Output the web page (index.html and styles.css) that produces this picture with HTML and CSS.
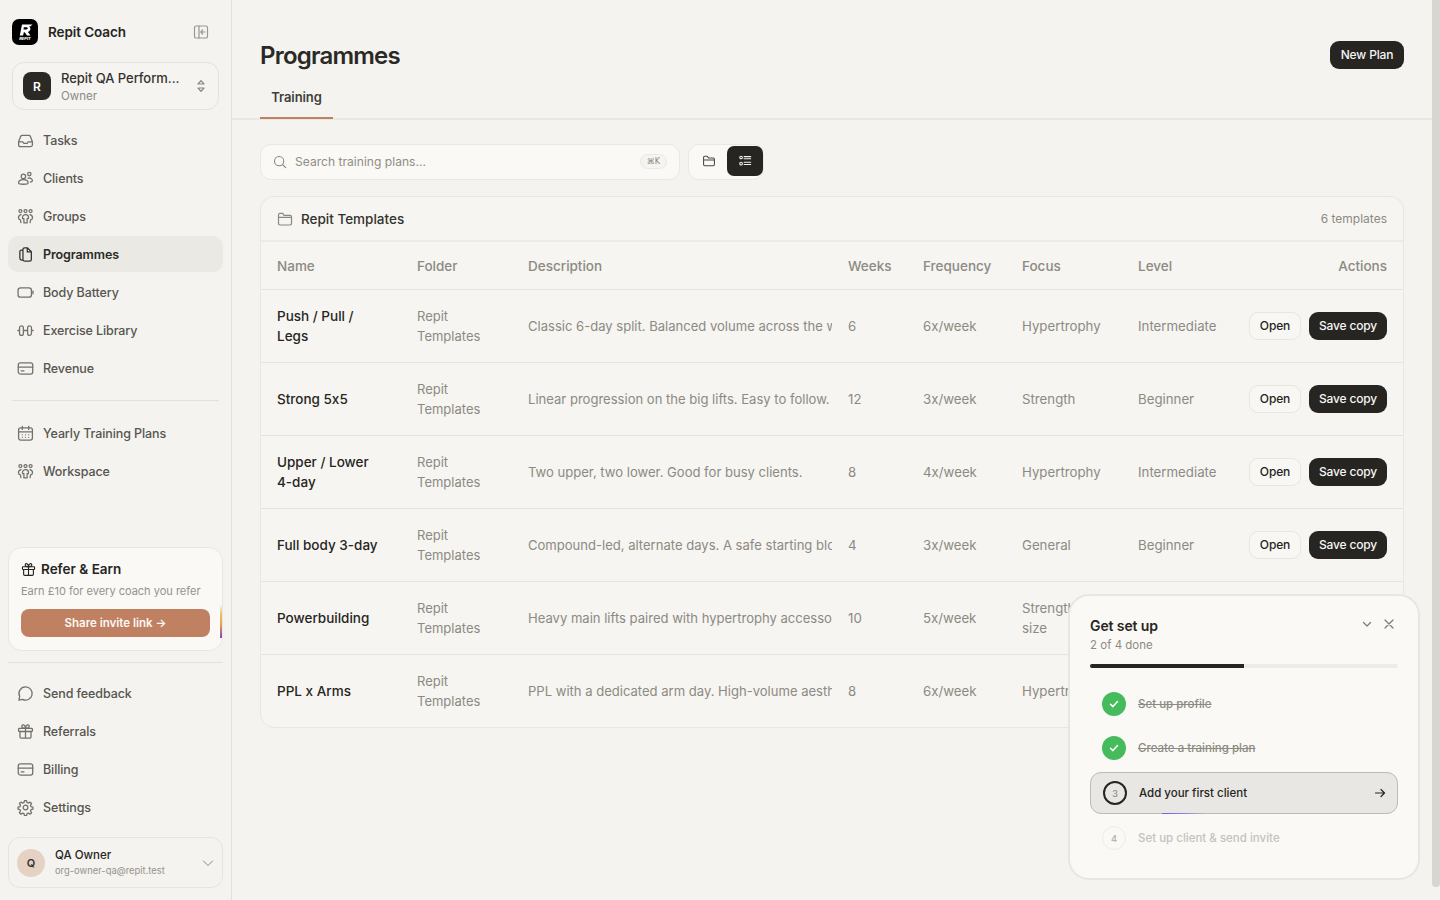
FILE: index.html
```html
<!DOCTYPE html>
<html lang="en">
<head>
<meta charset="utf-8">
<title>Programmes</title>
<link rel="stylesheet" href="styles.css">
</head>
<body>
<div class="app">
  <aside class="sidebar">
    <div class="brand">
      <div class="logo">
        <svg viewBox="0 0 26 26" width="26" height="26"><path d="M7.800 16.500 10 5.500h10.500l-2.200 2h-1.600c1.900.9 2.200 2.900 1 4.300-.5.6-1.100 1-1.800 1.200l2.600 3.500h-3.500l-2.200-3.300-1.100.2-.6 3.100z" fill="#fff"/><path d="M11.900 8.200h2.700c1.100 0 1.500 1 .7 1.700-.5.400-1.200.600-1.900.600h-1.900z" fill="#000"/></svg>
        <span class="logo-text">REPIT</span>
      </div>
      <span class="brand-name">Repit Coach</span>
      <svg class="collapse" viewBox="0 0 16 16" width="16" height="16"><rect x="1.500" y="2" width="13" height="12" rx="1.600"/><path d="M6 2v12M12 8H8M9.600 6 7.800 8l1.800 2"/></svg>
    </div>
    <div class="org">
      <div class="org-badge">R</div>
      <div class="org-text"><div class="org-name">Repit QA Perform...</div><div class="org-role">Owner</div></div>
      <svg class="updown" viewBox="0 0 10 16" width="10" height="16"><path d="M2 6 5 2.600 8 6zM2 10l3 3.400L8 10z"/></svg>
    </div>
    <nav class="nav">
      <a class="item"><svg class="ic" viewBox="0 0 16 16"><path d="M1.500 9.200V12a1.800 1.800 0 0 0 1.800 1.800h9.400a1.800 1.800 0 0 0 1.800-1.800V9.200M1.500 9.200l1.900-5a1.600 1.600 0 0 1 1.500-1h6.200a1.600 1.600 0 0 1 1.500 1l1.900 5M1.500 9.200h4l1 1.600h3l1-1.600h4"/></svg>Tasks</a>
      <a class="item"><svg class="ic" viewBox="0 0 16 16"><circle cx="6" cy="6" r="2.100"/><circle cx="11.600" cy="3.800" r="1.600"/><path d="M1.500 12.200c0-1.900 2-3.200 4.500-3.200s4.500 1.300 4.500 3.200c0 .8-1.300 1.200-4.500 1.200s-4.500-.4-4.500-1.200zM10.500 7.600c2-.3 4 .6 4 2.500 0 .7-.7 1.100-1.800 1.200"/></svg>Clients</a>
      <a class="item"><svg class="ic" viewBox="0 0 16 16"><circle cx="3.200" cy="2.900" r="1.400"/><circle cx="8" cy="2.900" r="1.400"/><circle cx="12.800" cy="2.900" r="1.400"/><path d="M8 6.200c1.700 0 2.800 1.200 2.800 2.500V10H9.500v4h-3v-4H5.200V8.700C5.200 7.400 6.300 6.200 8 6.200zM3.800 6.300C2.200 6.700 1.300 8 1.400 9.400c.1 1.100.9 1.600 1.800 1.700l.5 2.600M12.200 6.300c1.600.4 2.500 1.700 2.400 3.100-.1 1.100-.9 1.600-1.800 1.700l-.5 2.600"/></svg>Groups</a>
      <a class="item active"><svg class="ic" viewBox="0 0 16 16"><path d="M7.200 1.800h2.700l3.600 3.600v7.200a1.600 1.600 0 0 1-1.600 1.600H7.200a1.600 1.600 0 0 1-1.600-1.600V3.400a1.600 1.600 0 0 1 1.600-1.600zM9.700 1.800v3.800h3.800M5.600 3.800H4.300a1.600 1.600 0 0 0-1.600 1.600v6.200a1.600 1.600 0 0 0 1.600 1.600h1.300"/></svg>Programmes</a>
      <a class="item"><svg class="ic" viewBox="0 0 16 16"><rect x="1" y="3.600" width="12.600" height="8.800" rx="2.400"/><path d="M15 6.800v2.400"/></svg>Body Battery</a>
      <a class="item"><svg class="ic" viewBox="0 0 16 16"><path d="M.8 8h1.400M13.800 8h1.400M6 8h4M4 3.600a1.700 1.700 0 0 1 2 1.600v5.600a1.800 1.800 0 0 1-3.600 0V5.200A1.700 1.700 0 0 1 4 3.600zM12 3.600a1.700 1.700 0 0 0-2 1.600v5.600a1.800 1.800 0 0 0 3.600 0V5.200A1.700 1.700 0 0 0 12 3.600z"/></svg>Exercise Library</a>
      <a class="item"><svg class="ic" viewBox="0 0 16 16"><rect x="1.200" y="2.800" width="13.600" height="10.400" rx="2"/><path d="M1.200 6.800h13.600M4 10.300h2.500"/></svg>Revenue</a>
      <div class="nav-sep"></div>
      <a class="item"><svg class="ic" viewBox="0 0 16 16"><rect x="1.500" y="2.800" width="13" height="11.400" rx="2"/><path d="M1.500 6.400h13M5 1.200v3M11 1.200v3M5 9.200h.01M8 9.200h.01M11 9.200h.01M5 11.600h.01M8 11.600h.01M11 11.600h.01"/></svg>Yearly Training Plans</a>
      <a class="item"><svg class="ic" viewBox="0 0 16 16"><circle cx="3.200" cy="2.900" r="1.400"/><circle cx="8" cy="2.900" r="1.400"/><circle cx="12.800" cy="2.900" r="1.400"/><path d="M8 6.200c1.700 0 2.800 1.200 2.800 2.500V10H9.500v4h-3v-4H5.200V8.700C5.200 7.400 6.300 6.200 8 6.200zM3.800 6.300C2.200 6.700 1.300 8 1.400 9.400c.1 1.100.9 1.600 1.800 1.700l.5 2.600M12.200 6.300c1.600.4 2.500 1.700 2.400 3.100-.1 1.100-.9 1.600-1.800 1.700l-.5 2.600"/></svg>Workspace</a>
    </nav>
    <div class="refer">
      <div class="refer-title"><svg class="gift" viewBox="0 0 16 16"><rect x="1.500" y="5" width="13" height="3" rx=".8"/><path d="M2.800 8v5a1.200 1.200 0 0 0 1.200 1.200h8a1.200 1.200 0 0 0 1.200-1.200V8M8 5v9.200M8 5C6.500 5 4.500 4.600 4.500 3.100 4.500 2 5.400 1.400 6.300 1.800 7.300 2.300 8 4 8 5zM8 5c1.500 0 3.500-.4 3.500-1.900 0-1.100-.9-1.700-1.800-1.300C8.700 2.300 8 4 8 5z"/></svg>Refer &amp; Earn</div>
      <div class="refer-sub">Earn £10 for every coach you refer</div>
      <button class="share">Share invite link →</button>
      <span class="refer-edge"></span>
    </div>
    <div class="foot-sep"></div>
    <nav class="nav">
      <a class="item"><svg class="ic" viewBox="0 0 16 16"><path d="M8 1.800a6.200 6.200 0 1 1-2.800 11.700L1.800 14.200l.7-3.400A6.200 6.200 0 0 1 8 1.800z"/></svg>Send feedback</a>
      <a class="item"><svg class="ic" viewBox="0 0 16 16"><rect x="1.500" y="5" width="13" height="3" rx=".8"/><path d="M2.800 8v5a1.200 1.200 0 0 0 1.200 1.200h8a1.200 1.200 0 0 0 1.200-1.200V8M8 5v9.200M8 5C6.500 5 4.500 4.600 4.500 3.100 4.500 2 5.400 1.400 6.300 1.800 7.300 2.300 8 4 8 5zM8 5c1.500 0 3.500-.4 3.500-1.900 0-1.100-.9-1.700-1.800-1.300C8.700 2.300 8 4 8 5z"/></svg>Referrals</a>
      <a class="item"><svg class="ic" viewBox="0 0 16 16"><rect x="1.200" y="2.800" width="13.600" height="10.400" rx="2"/><path d="M1.200 6.800h13.600M4 10.300h2.500"/></svg>Billing</a>
      <a class="item"><svg class="ic" viewBox="0 0 16 16"><circle cx="8" cy="8" r="2.200"/><path d="M7 1.500h2l.4 1.800 1.300.6 1.600-1 1.400 1.400-1 1.600.5 1.300 1.800.4v2l-1.800.4-.5 1.300 1 1.600-1.400 1.400-1.600-1-1.300.5-.4 1.800H7l-.4-1.800-1.300-.5-1.600 1-1.400-1.400 1-1.600-.5-1.300-1.800-.4v-2l1.800-.4.5-1.300-1-1.600 1.400-1.400 1.600 1 1.300-.6z"/></svg>Settings</a>
    </nav>
    <div class="user">
      <div class="avatar">Q</div>
      <div class="user-text"><div class="user-name">QA Owner</div><div class="user-mail">org-owner-qa@repit.test</div></div>
      <svg class="chev" viewBox="0 0 12 12" width="12" height="12"><path d="M1.500 4 6 8.500 10.500 4"/></svg>
    </div>
  </aside>

  <main class="main">
    <header class="head">
      <div class="head-row">
        <h1>Programmes</h1>
        <button class="btn-dark new">New Plan</button>
      </div>
      <div class="tabs"><span class="tab">Training</span></div>
    </header>
    <section class="content">
      <div class="tools">
        <div class="search">
          <svg class="search-ic" viewBox="0 0 16 16" width="14" height="14"><circle cx="7" cy="7" r="5.300"/><path d="m11 11 3.500 3.500"/></svg>
          <span class="placeholder">Search training plans...</span>
          <kbd class="kbd">⌘K</kbd>
        </div>
        <div class="toggle">
          <span class="tg"><svg class="ic12" viewBox="0 0 16 16"><path d="M1.800 5.500V4a1.400 1.400 0 0 1 1.400-1.400h2.700l1.500 1.900h5.400a1.400 1.400 0 0 1 1.400 1.400v6.100a1.400 1.400 0 0 1-1.400 1.400H3.200A1.400 1.400 0 0 1 1.800 12zM1.800 6.800h12.400"/></svg></span>
          <span class="tg on"><svg class="ic12" viewBox="0 0 16 16"><circle cx="3.500" cy="4" r="1.500"/><circle cx="3.500" cy="11" r="1.500"/><path d="M7 3h7.500M7 5.500h7.500M7 9.500h7.500M7 12h7.500"/></svg></span>
        </div>
      </div>
      <div class="card">
        <div class="card-head">
          <svg class="folder" viewBox="0 0 16 16"><path d="M1.500 5V3.800a1.400 1.400 0 0 1 1.400-1.400h2.800l1.400 1.900h5.900a1.400 1.400 0 0 1 1.500 1.400v6.900a1.400 1.400 0 0 1-1.400 1.400H2.900a1.400 1.400 0 0 1-1.400-1.400zM1.500 6.400h13"/></svg>
          <span class="card-title">Repit Templates</span>
          <span class="count">6 templates</span>
        </div>
        <table class="tbl">
          <colgroup><col class="c1"><col class="c2"><col class="c3"><col class="c4"><col class="c5"><col class="c6"><col class="c7"><col class="c8"></colgroup>
          <thead><tr><th>Name</th><th>Folder</th><th>Description</th><th>Weeks</th><th>Frequency</th><th>Focus</th><th>Level</th><th class="r">Actions</th></tr></thead>
          <tbody>
            <tr><td class="name">Push / Pull / Legs</td><td class="fold">Repit Templates</td><td class="desc"><div class="clip">Classic 6-day split. Balanced volume across the week for intermediate lifters.</div></td><td>6</td><td>6x/week</td><td>Hypertrophy</td><td>Intermediate</td><td class="r"><div class="acts"><button class="btn-light">Open</button><button class="btn-dark">Save copy</button></div></td></tr>
            <tr><td class="name">Strong 5x5</td><td class="fold">Repit Templates</td><td class="desc"><div class="clip">Linear progression on the big lifts. Easy to follow.</div></td><td>12</td><td>3x/week</td><td>Strength</td><td>Beginner</td><td class="r"><div class="acts"><button class="btn-light">Open</button><button class="btn-dark">Save copy</button></div></td></tr>
            <tr><td class="name">Upper / Lower 4-day</td><td class="fold">Repit Templates</td><td class="desc"><div class="clip">Two upper, two lower. Good for busy clients.</div></td><td>8</td><td>4x/week</td><td>Hypertrophy</td><td>Intermediate</td><td class="r"><div class="acts"><button class="btn-light">Open</button><button class="btn-dark">Save copy</button></div></td></tr>
            <tr><td class="name">Full body 3-day</td><td class="fold">Repit Templates</td><td class="desc"><div class="clip">Compound-led, alternate days. A safe starting block for new clients.</div></td><td>4</td><td>3x/week</td><td>General</td><td>Beginner</td><td class="r"><div class="acts"><button class="btn-light">Open</button><button class="btn-dark">Save copy</button></div></td></tr>
            <tr><td class="name">Powerbuilding</td><td class="fold">Repit Templates</td><td class="desc"><div class="clip">Heavy main lifts paired with hypertrophy accessory work each week.</div></td><td>10</td><td>5x/week</td><td>Strength &amp; size</td><td>Advanced</td><td class="r"><div class="acts"><button class="btn-light">Open</button><button class="btn-dark">Save copy</button></div></td></tr>
            <tr><td class="name">PPL x Arms</td><td class="fold">Repit Templates</td><td class="desc"><div class="clip">PPL with a dedicated arm day. High-volume aesthetics focused block.</div></td><td>8</td><td>6x/week</td><td>Hypertrophy</td><td>Advanced</td><td class="r"><div class="acts"><button class="btn-light">Open</button><button class="btn-dark">Save copy</button></div></td></tr>
          </tbody>
        </table>
      </div>
    </section>
  </main>
  <div class="scrollbar"><div class="thumb"></div></div>
</div>

<div class="setup">
  <div class="setup-top">
    <div><div class="setup-title">Get set up</div><div class="setup-sub">2 of 4 done</div></div>
    <div class="setup-ctrl">
      <svg viewBox="0 0 12 12" width="12" height="12"><path d="M2.500 4.500 6 8l3.500-3.500"/></svg>
      <svg viewBox="0 0 12 12" width="12" height="12"><path d="m2 2 8 8M10 2l-8 8"/></svg>
    </div>
  </div>
  <div class="progress"><div class="progress-fill"></div></div>
  <div class="step done"><span class="tick"><svg viewBox="0 0 12 12" width="12" height="12"><path d="m2.500 6.200 2.400 2.400 4.600-5"/></svg></span><span class="step-text">Set up profile</span></div>
  <div class="step done"><span class="tick"><svg viewBox="0 0 12 12" width="12" height="12"><path d="m2.500 6.200 2.400 2.400 4.600-5"/></svg></span><span class="step-text">Create a training plan</span></div>
  <div class="step current"><span class="num">3</span><span class="step-text">Add your first client</span><svg class="go" viewBox="0 0 12 12" width="12" height="12"><path d="M1.500 6h9M7 2.500 10.500 6 7 9.500"/></svg><span class="glow"></span></div>
  <div class="step todo"><span class="num">4</span><span class="step-text">Set up client &amp; send invite</span></div>
</div>
</body>
</html>
```
FILE: styles.css
```css
* { box-sizing: border-box; }
html, body { margin: 0; height: 100%; overflow: hidden; }
body { background: #f4f3ef; color: #262522; font-family: Inter, "Liberation Sans", sans-serif; font-size: 13px; font-feature-settings: "calt" 0; }
button { font-family: inherit; font-feature-settings: inherit; cursor: pointer; }
svg { fill: none; stroke: currentColor; stroke-width: 1.200; stroke-linecap: round; stroke-linejoin: round; flex: none; }

.app { display: flex; height: 900px; }

/* Sidebar */
.sidebar { width: 232px; flex: none; border-right: 1px solid #e3e1dc; padding: 0 8px; display: flex; flex-direction: column; height: 900px; }
.brand { height: 64px; padding: 0 14px 0 4px; display: flex; align-items: center; gap: 10px; }
.logo { width: 26px; height: 26px; border-radius: 7px; background: #000; position: relative; overflow: hidden; flex: none; }
.logo svg { display: block; stroke: none; }
.logo-text { position: absolute; left: 0; right: 0; top: 17px; text-align: center; color: #fff; font-size: 4px; font-weight: 800; font-style: italic; line-height: 5px; }
.brand-name { font-size: 13.500px; font-weight: 600; letter-spacing: -.1px; flex: 1; margin-top: -1px; }
.collapse { color: #9a9890; }
.org { margin: -2px 4px 0; height: 48px; border: 1px solid #e4e2dc; border-radius: 12px; background: #f5f4f0; display: flex; align-items: center; padding: 0 12px 0 10px; gap: 10px; }
.org-badge { width: 28px; height: 28px; border-radius: 8px; background: #2a2926; color: #fff; font-size: 12px; font-weight: 600; display: flex; align-items: center; justify-content: center; flex: none; }
.org-text { flex: 1; min-width: 0; }
.org-name { font-size: 13px; font-weight: 500; line-height: 18px; color: #33322e; white-space: nowrap; letter-spacing: -.05px; }
.org-role { font-size: 11.500px; line-height: 16px; color: #8c8a83; margin-top: 1px; }
.updown { color: #8a8880; }
.nav { display: flex; flex-direction: column; gap: 2px; margin-top: 12px; }
.item { height: 36px; border-radius: 10px; padding: 0 9px; display: flex; align-items: center; gap: 9px; font-size: 12.500px; font-weight: 500; letter-spacing: -.1px; color: #57554f; }
.item.active { background: #ebe9e4; color: #2a2926; font-weight: 600; }
.ic { width: 17px; height: 17px; color: #73716a; }
.gift { width: 15px; height: 15px; color: #262522; }
.folder { width: 16px; height: 16px; color: #8a8880; }
.item.active .ic { color: #33322e; }
.nav-sep { height: 1px; background: #e3e1db; margin: 12px 4px; }
.refer { margin-top: auto; height: 104px; border: 1px solid #e9e7e2; border-radius: 14px; background: #faf9f6; padding: 12px 12px 0; position: relative; overflow: hidden; flex: none; }
.refer-title { display: flex; align-items: center; gap: 5px; font-size: 13.500px; font-weight: 600; line-height: 18px; color: #262522; }
.refer-sub { margin-top: 5px; font-size: 11px; line-height: 16px; color: #94928b; white-space: nowrap; }
.share { margin-top: 10px; width: 189px; height: 28px; border: 0; border-radius: 8px; background: #c08163; color: #fdf8f3; font-size: 11.500px; font-weight: 600; padding: 0; }
.refer-edge { position: absolute; right: 0; top: 56px; width: 2px; height: 34px; background: linear-gradient(transparent, #e8c06c 30%, #e8a24c 60%, #8a3fc4); }
.foot-sep { height: 1px; background: #e3e1db; margin: 11px 0 0; flex: none; }
.user { margin-top: 12px; margin-bottom: 12px; height: 51px; border: 1px solid #e6e4de; border-radius: 12px; display: flex; align-items: center; padding: 0 8px; gap: 10px; flex: none; }
.avatar { width: 28px; height: 28px; border-radius: 50%; background: #e5d2c4; color: #33322e; font-size: 11px; font-weight: 600; display: flex; align-items: center; justify-content: center; flex: none; }
.user-text { flex: 1; min-width: 0; padding-top: 1px; }
.user-name { font-size: 11.500px; font-weight: 500; line-height: 16px; color: #262522; }
.user-mail { font-size: 9.400px; line-height: 16px; color: #94928b; white-space: nowrap; }
.chev { color: #8a8880; stroke-width: 1; }

/* Main */
.main { flex: 1; min-width: 0; }
.head { height: 120px; border-bottom: 2px solid #e9e7e2; padding: 0 28px; }
.head-row { height: 77px; padding-top: 33px; display: flex; align-items: center; justify-content: space-between; }
h1 { margin: 0; font-size: 24px; font-weight: 600; letter-spacing: -.8px; color: #2a2926; }
.tabs { display: flex; }
.tab { width: 73px; height: 42px; text-align: center; line-height: 41px; font-size: 13px; font-weight: 600; letter-spacing: -.1px; color: #403e39; border-bottom: 2px solid #c08163; }
.btn-dark { height: 28px; border: 0; border-radius: 9px; background: #262522; color: #f7f6f2; font-size: 12px; font-weight: 500; letter-spacing: -.15px; padding: 0; white-space: nowrap; width: 78px; }
.new { width: 74px; padding-bottom: 1px; }
.btn-light { height: 28px; width: 52px; border: 1px solid #e8e6e0; border-radius: 9px; background: #f8f7f3; color: #262522; font-size: 12px; font-weight: 500; letter-spacing: -.15px; padding: 0; }
.content { padding: 24px 28px 0; }
.tools { display: flex; gap: 8px; }
.search { width: 420px; height: 36px; border: 1px solid #eae8e3; border-radius: 11px; background: #faf9f6; display: flex; align-items: center; padding: 0 12px 1px; gap: 8px; }
.search-ic { color: #85837c; }
.placeholder { flex: 1; font-size: 12.100px; color: #8f8d86; }
.kbd { height: 15px; padding: 0 6px; border: 1px solid #eae8e3; border-radius: 8px; background: #f5f4f0; font-family: "DejaVu Sans", Inter, sans-serif; font-size: 8px; line-height: 13px; color: #8a8880; }
.toggle { height: 36px; width: 76px; border: 1px solid #eae8e3; border-radius: 11px; background: #faf9f6; padding: 1px 0 0 2px; display: flex; }
.tg { width: 36px; height: 30px; flex: none; border-radius: 7px; display: flex; align-items: center; justify-content: center; color: #4a4843; }
.tg.on { background: #262522; color: #f4f3ef; }
.ic12 { width: 14px; height: 14px; }
.card { margin-top: 16px; border: 1px solid #e8e6e1; border-radius: 14px; background: #f6f5f1; width: 1144px; overflow: hidden; }
.card-head { height: 45px; border-bottom: 2px solid #ecebe6; display: flex; align-items: center; padding: 0 16px; gap: 8px; }
.card-title { font-size: 13.500px; font-weight: 500; color: #33322e; flex: 1; }
.count { font-size: 12px; color: #8c8a83; }
.tbl { width: 100%; table-layout: fixed; border-collapse: collapse; }
.c1 { width: 140px; } .c2 { width: 111px; } .c3 { width: 320px; } .c4 { width: 75px; } .c5 { width: 99px; } .c6 { width: 116px; } .c7 { width: 111px; } .c8 { width: auto; }
.tbl th { height: 47px; padding: 1px 0 0 16px; text-align: left; font-size: 13.500px; font-weight: 500; color: #8c8a83; border-bottom: 1px solid #e6e4df; }
.tbl td { height: 73px; padding: 0 16px; font-size: 13.250px; line-height: 20px; color: #8c8a83; border-bottom: 1px solid #e6e4df; }
.tbl tr:last-child td { border-bottom: 0; }
.tbl td.name { color: #262522; font-size: 13.500px; font-weight: 500; }
.tbl td.fold { font-size: 13px; }
.tbl td.desc { font-size: 13.050px; padding-right: 0; }
.tbl .r { text-align: right; padding-right: 16px; padding-left: 0; }
.clip { overflow: hidden; white-space: nowrap; }
.acts { display: flex; gap: 8px; justify-content: flex-end; }

/* Scrollbar */
.scrollbar { width: 8px; flex: none; height: 900px; }
.thumb { height: 887px; background: #d8d6d0; border-radius: 0 0 4px 4px; }

/* Setup popover */
.setup { position: fixed; left: 1068px; top: 594px; width: 352px; height: 286px; border: 2px solid #e8e6e1; border-radius: 21px; background: #faf9f6; padding: 19px 20px 0; }
.setup-top { display: flex; justify-content: space-between; align-items: flex-start; }
.setup-title { font-size: 14px; font-weight: 600; line-height: 22px; color: #262522; letter-spacing: -.1px; }
.setup-sub { font-size: 11.500px; line-height: 16px; color: #8c8a83; }
.setup-ctrl { display: flex; gap: 10px; color: #7c7a73; margin: 3px 3px 0 0; }
.progress { margin-top: 11px; height: 4px; background: #eeece8; border-radius: 2px; overflow: hidden; }
.progress-fill { width: 50%; height: 100%; background: #262522; }
.step { display: flex; align-items: center; height: 44px; padding-left: 12px; gap: 12px; font-size: 11.500px; font-weight: 500; position: relative; }
.progress + .step { margin-top: 14px; }
.tick { width: 24px; height: 24px; border-radius: 50%; background: #45bb5c; color: #fff; display: flex; align-items: center; justify-content: center; }
.tick svg { stroke-width: 1.500; }
.done .step-text { color: #8c8a83; text-decoration: line-through; }
.step.current { height: 42px; margin-top: 2px; background: #e8e7e3; border: 1px solid #bdbbb5; border-radius: 11px; color: #262522; padding: 0 11px 0 12px; }
.step.current .step-text { flex: 1; }
.num { width: 24px; height: 24px; border-radius: 50%; display: flex; align-items: center; justify-content: center; font-size: 9px; font-weight: 500; color: #8c8a83; border: 2px solid #262522; flex: none; }
.go { color: #262522; }
.glow { position: absolute; left: 71px; bottom: -1px; width: 44px; height: 1px; background: linear-gradient(90deg, #6d63e6, #8a82ea 50%, transparent); }
.step.todo { height: 46px; margin-top: 1px; color: #c4c2bc; }
.todo .num { border: 1px solid #eeece8; color: #b5b3ad; font-weight: 600; }
```
